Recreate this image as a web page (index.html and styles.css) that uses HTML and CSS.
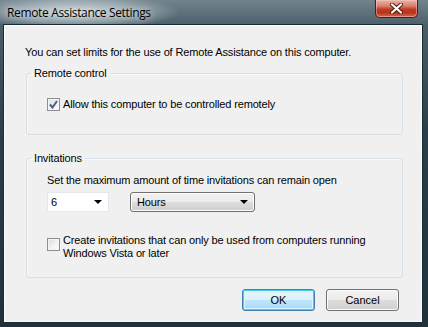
FILE: index.html
```html
<!DOCTYPE html>
<html>
<head>
  <title>Remote Assistance Settings</title>
  <link rel="stylesheet" href="styles.css">
</head>
<body>
  <div class="window">
    <div class="titlebar">
      <span class="title">Remote Assistance Settings</span>
      <button class="close-btn" aria-label="Close">
        <svg width="13" height="11" viewBox="0 0 13 11">
          <path d="M2 1.5 L11 9.5 M11 1.5 L2 9.5" stroke="#4a1a12" stroke-width="4" stroke-linecap="round"/>
          <path d="M2 1.5 L11 9.5 M11 1.5 L2 9.5" stroke="#fff" stroke-width="2.2" stroke-linecap="round"/>
        </svg>
      </button>
    </div>
    <div class="client">
      <p class="intro">You can set limits for the use of Remote Assistance on this computer.</p>

      <fieldset class="group group-control">
        <legend>Remote control</legend>
        <label class="check-row">
          <span class="checkbox checked">
            <svg width="9" height="9" viewBox="0 0 9 9"><path d="M1 4.5 L3.5 7.5 L8 1" fill="none" stroke="#4a5f97" stroke-width="2"/></svg>
          </span>
          <span>Allow this computer to be controlled remotely</span>
        </label>
      </fieldset>

      <fieldset class="group group-invite">
        <legend>Invitations</legend>
        <div class="invite-text">Set the maximum amount of time invitations can remain open</div>
        <div class="combo-row">
          <div class="combo combo-edit"><span>6</span><i class="arrow"></i></div>
          <div class="combo combo-list"><span>Hours</span><i class="arrow"></i></div>
        </div>
        <label class="check-row check-multi">
          <span class="checkbox"></span>
          <span>Create invitations that can only be used from computers running<br>Windows Vista or later</span>
        </label>
      </fieldset>

      <div class="actions">
        <button class="btn btn-default">OK</button>
        <button class="btn">Cancel</button>
      </div>
    </div>
  </div>
</body>
</html>
```

FILE: styles.css
```css
body {
  margin: 0;
  width: 428px;
  height: 327px;
  overflow: hidden;
  font-family: 'Liberation Sans', Arial, sans-serif;
  font-size: 11px;
  letter-spacing: -0.15px;
  color: #000;
}

.window {
  width: 428px;
  height: 327px;
  box-sizing: border-box;
  background: linear-gradient(180deg, #71838d 0%, #4a5e69 8%, #2a3f4b 40%, #1f323c 100%);
  display: flex;
  flex-direction: column;
}

/* title bar */
.titlebar {
  height: 25px;
  display: flex;
  justify-content: space-between;
  align-items: flex-start;
  background: radial-gradient(ellipse 105px 18px at 75px 12px, rgba(225,232,236,0.85) 0%, rgba(200,212,218,0.5) 60%, transparent 100%);
}

.title {
  font-family: 'Open Sans', sans-serif;
  font-size: 12px;
  letter-spacing: -0.35px;
  line-height: 16px;
  margin: 5px 0 0 7px;
  color: #000;
  text-shadow: 0 0 6px rgba(255,255,255,0.9);
}

.close-btn {
  width: 43px;
  height: 18px;
  margin: 0 10px 0 0;
  padding: 0;
  border: 1px solid #4e1d16;
  border-top: none;
  border-radius: 0 0 5px 5px;
  background: linear-gradient(180deg, #e8b4a8 0%, #d8816d 35%, #c13a22 55%, #b9341e 75%, #d56a4e 100%);
  box-shadow: inset 0 0 0 1px rgba(255,210,200,0.45);
  display: flex;
  align-items: center;
  justify-content: center;
}

/* client area */
.client {
  flex: 1;
  margin: 0 6px 5px 4px;
  background: #f0f0f0;
  border: 1px solid #fbfbfb;
  box-shadow: 0 0 0 1px #1c2a32;
  display: flex;
  flex-direction: column;
}

.intro {
  margin: 20px 0 0 20px;
  line-height: 13px;
}

.group {
  margin: 8px 0 0 21px;
  width: 377px;
  box-sizing: border-box;
  padding: 0 0 0 20px;
  border: 1px solid #d5dfe5;
  border-radius: 3px;
  box-shadow: inset 1px 1px 0 #fafafa;
}

.group legend {
  margin-left: -16px;
  padding: 0 3px;
  line-height: 13px;
}

.group-control {
  padding-top: 18px;
  padding-bottom: 23px;
}

.group-invite {
  margin-top: 17px;
  padding-top: 9px;
  padding-bottom: 17px;
}

.check-row {
  display: flex;
  align-items: flex-start;
  gap: 3px;
  line-height: 13px;
}

.checkbox {
  width: 11px;
  height: 11px;
  flex: none;
  border: 1px solid #8f8f8f;
  background: linear-gradient(135deg, #dcdcdc 0%, #f4f4f4 60%, #fefefe 100%);
  box-shadow: inset 0 0 0 1px #f4f4f4;
  display: flex;
  align-items: center;
  justify-content: center;
}

.check-multi .checkbox {
  margin-top: 4px;
}

.invite-text {
  line-height: 13px;
}

.combo-row {
  display: flex;
  gap: 21px;
  margin-top: 5px;
}

.combo {
  height: 20px;
  box-sizing: border-box;
  display: flex;
  align-items: center;
  justify-content: space-between;
  padding: 0 6px 0 3px;
}

.combo-edit {
  width: 62px;
  background: #fff;
  border: 1px solid #e3e9ef;
}

.combo-list {
  width: 125px;
  padding-left: 6px;
  border: 1px solid #707070;
  border-radius: 3px;
  background: linear-gradient(180deg, #f2f2f2 0%, #ebebeb 50%, #dddddd 51%, #cfcfcf 100%);
  box-shadow: inset 0 0 0 1px #fcfcfc;
}

.arrow {
  width: 0;
  height: 0;
  border-left: 4px solid transparent;
  border-right: 4px solid transparent;
  border-top: 4px solid #000;
}

.check-multi {
  margin-top: 22px;
}

/* buttons */
.actions {
  display: flex;
  justify-content: flex-end;
  gap: 11px;
  margin: 11px 22px 0 0;
}

.btn {
  width: 73px;
  height: 22px;
  padding: 0;
  font-family: 'Liberation Sans', Arial, sans-serif;
  font-size: 11px;
  color: #000;
  border: 1px solid #707070;
  border-radius: 3px;
  background: linear-gradient(180deg, #f2f2f2 0%, #ebebeb 50%, #dddddd 51%, #cfcfcf 100%);
  box-shadow: inset 0 0 0 1px #fcfcfc;
}

.btn-default {
  border-color: #3c7fb1;
  background: linear-gradient(180deg, #eaf6fd 0%, #d9f0fc 50%, #bee6fd 51%, #a7d9f5 100%);
  box-shadow: inset 0 0 0 1px #48d0ef, inset 0 0 0 2px #dff3fb;
}
```
